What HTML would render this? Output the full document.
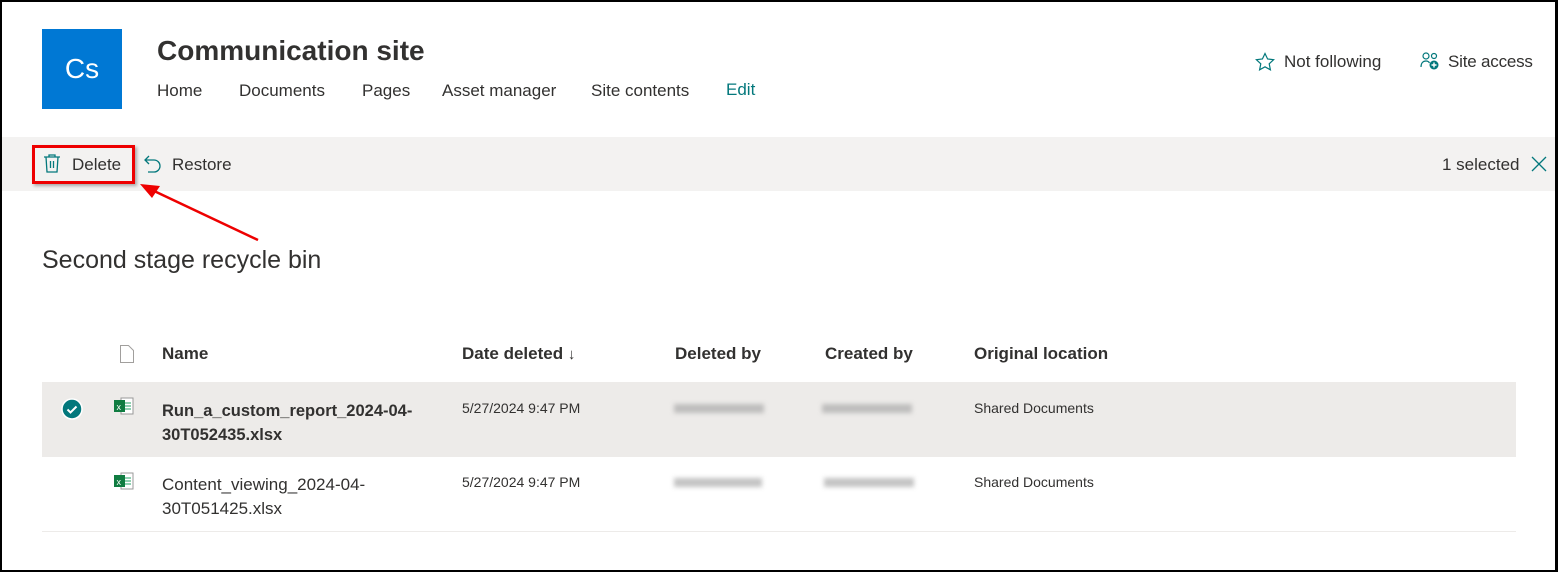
<!DOCTYPE html>
<html><head><style>
*{margin:0;padding:0;box-sizing:border-box}
body{width:1558px;height:572px;overflow:hidden;background:#fff;font-family:"Liberation Sans",sans-serif;color:#323130;position:relative}
.frame{position:absolute;left:0;top:0;width:1558px;height:572px;border:2px solid #000;border-right-width:3px;pointer-events:none}
.a{position:absolute;white-space:nowrap}
.logo{left:42px;top:29px;width:80px;height:80px;background:#0078d4;color:#fff;font-size:28px;display:flex;align-items:center;justify-content:center}
.nav{top:81px;font-size:17px;color:#323130}
.bar{left:2px;top:137px;width:1553px;height:54px;background:#f3f2f1}
.hd{top:344px;font-size:17px;font-weight:bold;color:#323130}
.cell{font-size:14px;color:#323130}
.blur{position:absolute;height:9px;background:#aaa;filter:blur(2.5px);opacity:.7}
</style></head><body>
<div class="a logo">Cs</div>
<div class="a" style="left:157px;top:35px;font-size:28px;font-weight:bold;color:#323130">Communication site</div>
<div class="a nav" style="left:157px">Home</div>
<div class="a nav" style="left:239px">Documents</div>
<div class="a nav" style="left:362px">Pages</div>
<div class="a nav" style="left:442px">Asset manager</div>
<div class="a nav" style="left:591px">Site contents</div>
<div class="a nav" style="left:726px;top:80px;color:#03787c">Edit</div>
<svg class="a" style="left:1255px;top:52px" width="20" height="20" viewBox="0 0 20 20"><path d="M10 1.5l2.6 5.5 6 .7-4.4 4.1 1.2 6L10 14.8 4.6 17.8l1.2-6L1.4 7.7l6-.7z" fill="none" stroke="#03787c" stroke-width="1.2"/></svg>
<div class="a" style="left:1284px;top:52px;font-size:17px">Not following</div>
<svg class="a" style="left:1420px;top:51px" width="20" height="20" viewBox="0 0 20 20"><circle cx="6" cy="5" r="3" fill="none" stroke="#03787c" stroke-width="1.2"/><circle cx="14" cy="5" r="2.5" fill="none" stroke="#03787c" stroke-width="1.2"/><path d="M1 16c0-4 2-6 5-6 2 0 3 1 3.5 2" fill="none" stroke="#03787c" stroke-width="1.2"/><circle cx="14" cy="14" r="4.5" fill="#03787c"/><path d="M14 11.5v5M11.5 14h5" stroke="#fff" stroke-width="1.4"/></svg>
<div class="a" style="left:1448px;top:52px;font-size:17px;letter-spacing:-0.2px">Site access</div>
<div class="a bar"></div>
<svg class="a" style="left:42px;top:153px" width="20" height="22" viewBox="0 0 20 22"><path d="M2 4h16M7 4V2h6v2M4 4l1 15h10l1-15" fill="none" stroke="#03787c" stroke-width="1.3"/><path d="M8.5 8v7M11.5 8v7" stroke="#03787c" stroke-width="1.3"/></svg>
<div class="a" style="left:72px;top:155px;font-size:17px">Delete</div>
<div class="a" style="left:32px;top:145px;width:103px;height:39px;border:3px solid #e00;box-shadow:2px 2px 3px rgba(0,0,0,.3)"></div>
<svg class="a" style="left:143px;top:153px" width="20" height="22" viewBox="0 0 20 22"><path d="M6 3L2 7l4 4M2 7h9a6 6 0 010 12H5" fill="none" stroke="#03787c" stroke-width="1.3"/></svg>
<div class="a" style="left:172px;top:155px;font-size:17px">Restore</div>
<div class="a" style="left:1442px;top:155px;font-size:17px">1 selected</div>
<svg class="a" style="left:1531px;top:156px" width="16" height="16" viewBox="0 0 16 16"><path d="M1 1l14 14M15 1L1 15" stroke="#03787c" stroke-width="1.3"/></svg>
<svg class="a" style="left:0;top:0" width="1558" height="572"><path d="M258 240L152 190" stroke="#e00" stroke-width="2.5"/><path d="M140 184l20 2-8 12z" fill="#e00"/></svg>
<div class="a" style="left:42px;top:246px;font-size:25px;color:#323130">Second stage recycle bin</div>
<svg class="a" style="left:119px;top:344px" width="16" height="20" viewBox="0 0 16 20"><path d="M1.5 1.5h8l5 5v12h-13z" fill="none" stroke="#a19f9d"/></svg>
<div class="a hd" style="left:162px">Name</div>
<div class="a hd" style="left:462px">Date deleted <span style="font-weight:normal;font-size:15px">↓</span></div>
<div class="a hd" style="left:675px">Deleted by</div>
<div class="a hd" style="left:825px">Created by</div>
<div class="a hd" style="left:974px">Original location</div>
<div class="a" style="left:42px;top:382px;width:1474px;height:75px;background:#edebe9"></div>
<div class="a" style="left:42px;top:531px;width:1474px;height:1px;background:#edebe9"></div>
<svg class="a" style="left:61px;top:398px" width="22" height="22" viewBox="0 0 22 22"><circle cx="11" cy="11" r="10" fill="#03787c" stroke="#fff" stroke-width="1.5"/><path d="M6.5 11.5l3 3 6-6" fill="none" stroke="#fff" stroke-width="2"/></svg>
<svg class="a" style="left:113px;top:397px" width="22" height="20" viewBox="0 0 22 20"><rect x="8" y="1" width="12" height="16" fill="#fff" stroke="#999"/><path d="M12 6h6M12 9h6M12 12h6" stroke="#21a366"/><rect x="1" y="3" width="11" height="12" fill="#107c41"/><text x="3.5" y="13" font-size="9" fill="#fff" font-family="Liberation Sans">x</text></svg>
<svg class="a" style="left:113px;top:472px" width="22" height="20" viewBox="0 0 22 20"><rect x="8" y="1" width="12" height="16" fill="#fff" stroke="#999"/><path d="M12 6h6M12 9h6M12 12h6" stroke="#21a366"/><rect x="1" y="3" width="11" height="12" fill="#107c41"/><text x="3.5" y="13" font-size="9" fill="#fff" font-family="Liberation Sans">x</text></svg>
<div class="a" style="left:162px;top:399px;font-size:16.5px;font-weight:bold;line-height:24px">Run_a_custom_report_2024-04-<br>30T052435.xlsx</div>
<div class="a" style="left:162px;top:473px;font-size:17px;line-height:24px">Content_viewing_2024-04-<br>30T051425.xlsx</div>
<div class="a cell" style="left:462px;top:400px">5/27/2024 9:47 PM</div>
<div class="a cell" style="left:462px;top:474px">5/27/2024 9:47 PM</div>
<div class="blur" style="left:674px;top:404px;width:90px"></div>
<div class="blur" style="left:822px;top:404px;width:90px"></div>
<div class="blur" style="left:674px;top:478px;width:88px"></div>
<div class="blur" style="left:824px;top:478px;width:90px"></div>
<div class="a cell" style="left:974px;top:400px">Shared Documents</div>
<div class="a cell" style="left:974px;top:474px">Shared Documents</div>
<div class="frame"></div>
</body></html>
